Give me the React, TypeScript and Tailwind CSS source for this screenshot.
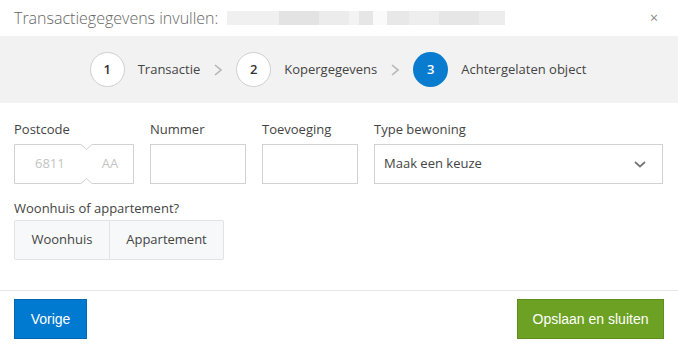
import React from 'react'

const font = { fontFamily: '"Open Sans", "Liberation Sans", sans-serif' }
const narrow = { fontFamily: '"Liberation Sans Narrow", "Liberation Sans", sans-serif' }

function Chevron() {
  return (
    <svg width="10" height="14" viewBox="0 0 10 14" className="mx-[13px]">
      <path d="M2 2 L8 7 L2 12" fill="none" stroke="#b5b5b5" strokeWidth="1.6" />
    </svg>
  )
}

function Step({ n, label, active }: { n: number; label: string; active?: boolean }) {
  return (
    <div className="flex items-center">
      <div
        className={`w-[35px] h-[35px] rounded-full flex items-center justify-center text-[13px] font-semibold ${
          active ? 'bg-[#0a7ccf] text-white' : 'bg-white border border-[#cfcfcf] text-[#333]'
        }`}
      >
        {n}
      </div>
      <span className="ml-[13px] text-[13px] text-[#444]">{label}</span>
    </div>
  )
}

function PostcodeInput() {
  return (
    <div className="relative w-[120px] h-[40px] flex items-center text-[13px] text-[#c4c4c4]">
      <svg className="absolute inset-0" width="120" height="40" viewBox="0 0 120 40">
        <path
          d="M0.5 0.5 H67 L72.5 5.5 L78 0.5 H119.5 V39.5 H78 L72.5 34.5 L67 39.5 H0.5 Z"
          fill="white"
          stroke="#d2d2d2"
          strokeWidth="1"
        />
      </svg>
      <span className="relative ml-[21px]">6811</span>
      <span className="relative ml-[37px]">AA</span>
    </div>
  )
}

export default function App() {
  return (
    <div className="w-[678px] h-[345px] bg-white overflow-hidden flex flex-col text-[#333]" style={font}>
      <div className="h-[36px] flex items-center px-[14px] shrink-0">
        <span className="text-[16px] font-light text-[#666]">Transactiegegevens invullen:</span>
        <div className="ml-[9px] flex h-[14px]">
          <div className="w-[52px] bg-[#f0f0f0]" />
          <div className="w-[40px] bg-[#e3e3e3]" />
          <div className="w-[30px] bg-[#ececec]" />
          <div className="w-[10px] bg-[#f3f3f3]" />
          <div className="w-[14px] bg-[#e6e6e6]" />
          <div className="w-[14px] bg-[#fafafa]" />
          <div className="w-[22px] bg-[#e8e8e8]" />
          <div className="w-[30px] bg-[#eeeeee]" />
          <div className="w-[40px] bg-[#e6e6e6]" />
          <div className="w-[26px] bg-[#ededed]" />
        </div>
        <div className="ml-auto mr-[6px] text-[#888] text-[14px] leading-none">×</div>
      </div>

      <div className="h-[67px] bg-[#f2f2f2] flex items-center justify-center shrink-0 pr-[2px]">
        <Step n={1} label="Transactie" />
        <Chevron />
        <Step n={2} label="Kopergegevens" />
        <Chevron />
        <Step n={3} label="Achtergelaten object" active />
      </div>

      <div className="px-[14px] pt-[17px] text-[13px] text-[#444]">
        <div className="flex gap-[16px]">
          <div className="w-[120px]">
            <div className="h-[24px]">Postcode</div>
            <PostcodeInput />
          </div>
          <div>
            <div className="h-[24px]">Nummer</div>
            <div className="w-[96px] h-[40px] border border-[#d2d2d2]" />
          </div>
          <div>
            <div className="h-[24px]">Toevoeging</div>
            <div className="w-[96px] h-[40px] border border-[#d2d2d2]" />
          </div>
          <div className="flex-1 mr-[1px]">
            <div className="h-[24px]">Type bewoning</div>
            <div className="h-[40px] border border-[#d2d2d2] flex items-center justify-between px-[9px]">
              <span>Maak een keuze</span>
              <svg width="14" height="10" viewBox="0 0 14 10" className="mr-[6px]">
                <path d="M2 3 L7 7.5 L12 3" fill="none" stroke="#777" strokeWidth="1.8" />
              </svg>
            </div>
          </div>
        </div>

        <div className="mt-[15px] h-[21px]">Woonhuis of appartement?</div>
        <div className="flex h-[40px] text-[#444]">
          <div className="w-[96px] border border-[#e3e3e3] bg-[#f7f8fa] rounded-l-[2px] flex items-center justify-center">
            Woonhuis
          </div>
          <div className="w-[114px] border border-l-0 border-[#e3e3e3] bg-[#f7f8fa] rounded-r-[2px] flex items-center justify-center">
            Appartement
          </div>
        </div>
      </div>

      <div className="mt-[30px] border-t border-[#e5e5e5] px-[14px] pt-[8px] flex justify-between">
        <button
          className="w-[73px] h-[40px] bg-[#0079d0] border border-[#0667b0] text-white text-[14px]"
          style={narrow}
        >
          Vorige
        </button>
        <button
          className="w-[147px] h-[40px] bg-[#6da124] border border-[#5e8e1d] text-white text-[14px]"
          style={narrow}
        >
          Opslaan en sluiten
        </button>
      </div>
    </div>
  )
}
